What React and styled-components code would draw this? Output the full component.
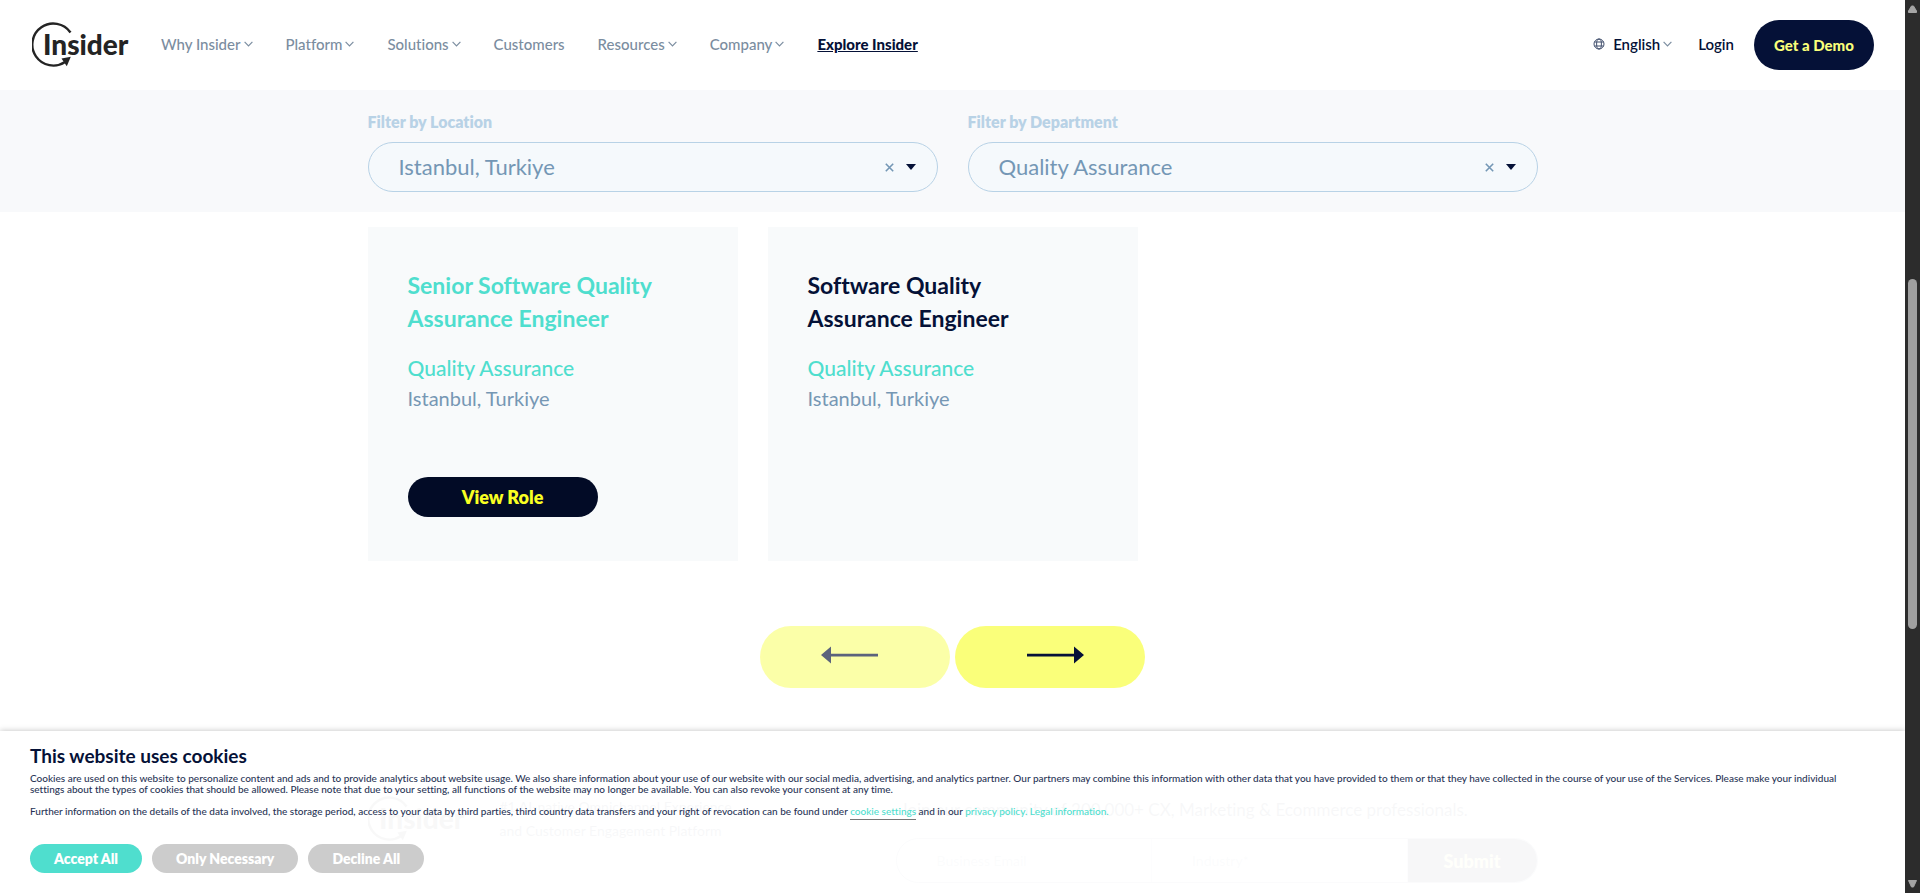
import React, { useState } from 'react';
import styled, { createGlobalStyle } from 'styled-components';

const navy = '#051137';
const teal = '#4fdece';
const yellow = '#faff7a';
const mist = '#f8fafb';
const slate = '#7497b5';

const GlobalStyle = createGlobalStyle`
  *, *::before, *::after { box-sizing: border-box; }
  body {
    margin: 0;
    overflow: hidden;
    background: #fff;
    color: ${navy};
    font-family: Lato, "Liberation Sans", sans-serif;
    font-variant-ligatures: none;
  }
  h2, h3, p { margin: 0; }
  a { color: inherit; text-decoration: none; }
  button, input, select { font-family: inherit; font-variant-ligatures: none; }
  button { border: 0; padding: 0; cursor: pointer; }
`;

const Shell = styled.div`
  display: flex;
  height: 100vh;
  overflow: hidden;
`;

const Page = styled.div`
  position: relative;
  flex: 1;
  min-width: 0;
  overflow: hidden;
`;

const Header = styled.header`
  display: flex;
  align-items: center;
  height: 90px;
  padding: 0 31px 0 32px;
`;

const HomeLink = styled.a`
  display: flex;
  margin-right: 31px;
`;

const Nav = styled.nav`
  display: flex;
  align-items: center;
  gap: 33px;
  margin-right: auto;
  padding-bottom: 2px;
`;

const NavItem = styled.a`
  display: flex;
  align-items: center;
  gap: 3px;
  color: ${(p) => (p.$strong ? navy : '#7b8da0')};
  font-size: 15px;
  font-weight: ${(p) => (p.$strong ? 900 : 500)};
  line-height: 20px;
  text-decoration: ${(p) => (p.$strong ? 'underline' : 'none')};
`;

const Account = styled.div`
  display: flex;
  align-items: center;
`;

const AccountLink = styled.a`
  display: flex;
  align-items: center;
  margin-right: ${(p) => p.$after}px;
  padding-bottom: 2px;
  font-size: 15px;
  font-weight: 600;
  line-height: 20px;
  svg:first-child { margin-right: 8px; }
  svg:last-child { margin-left: 3px; }
`;

const DemoButton = styled.button`
  width: 120px;
  height: 50px;
  border-radius: 25px;
  background: ${navy};
  color: ${yellow};
  font-size: 15px;
  font-weight: 900;
`;

const Filters = styled.form`
  padding: 22px 0 20px;
  background: #f8f9fb;
`;

const Container = styled.div`
  width: 100%;
  max-width: 1200px;
  margin: 0 auto;
  padding: 0 15px;
`;

const FilterRow = styled(Container)`
  display: grid;
  grid-template-columns: 1fr 1fr;
  gap: 30px;
`;

const FilterLabel = styled.label`
  display: block;
  margin-bottom: 10px;
  color: #b8d2e6;
  font-size: 16px;
  font-weight: 800;
  line-height: 20px;
`;

const SelectBox = styled.div`
  position: relative;
`;

const Select = styled.select`
  display: block;
  appearance: none;
  width: 100%;
  height: 50px;
  padding: 0 80px 2px 30px;
  border: 1px solid #b8d2e6;
  border-radius: 25px;
  outline: 0;
  background: #f5f9fc;
  color: ${slate};
  font-size: 22px;
`;

const SelectTools = styled.div`
  position: absolute;
  top: 0;
  right: 22px;
  display: flex;
  align-items: center;
  gap: 12px;
  height: 50px;
  pointer-events: none;
`;

const ClearButton = styled.button`
  display: flex;
  background: none;
  pointer-events: auto;
`;

const Cards = styled(Container)`
  display: grid;
  grid-template-columns: repeat(3, 1fr);
  gap: 30px;
  padding-top: 15px;
`;

const Card = styled.article`
  min-height: 334px;
  padding: 42px 40px 44px;
  background: ${mist};
`;

const CardTitle = styled.h3`
  max-width: 260px;
  margin-bottom: 17px;
  color: ${(p) => (p.$active ? teal : navy)};
  font-size: 23px;
  font-weight: 700;
  line-height: 33px;
`;

const Department = styled.p`
  color: ${teal};
  font-size: 21px;
  font-weight: 500;
  line-height: 31px;
`;

const Place = styled.p`
  color: #7697b4;
  font-size: 20px;
  line-height: 31px;
`;

const RoleLink = styled.a`
  display: flex;
  align-items: center;
  justify-content: center;
  width: 190px;
  height: 40px;
  margin-top: 63px;
  padding-bottom: 1px;
  border-radius: 20px;
  background: #020b26;
  color: #f9ff22;
  font-size: 18px;
  font-weight: 800;
`;

const Pager = styled.div`
  display: flex;
  justify-content: center;
  gap: 5px;
  padding: 65px 0;
`;

const PagerButton = styled.button`
  display: flex;
  align-items: center;
  justify-content: center;
  width: 190px;
  height: 62px;
  padding: 0 0 4px;
  border-radius: 31px;
  background: ${yellow};
  opacity: ${(p) => (p.disabled ? 0.65 : 1)};
`;

const Footer = styled.footer`
  padding: 42px 0 60px;
  background: #eceff2;
`;

const FooterRow = styled(Container)`
  display: flex;
  justify-content: space-between;
`;

const Brand = styled.div`
  display: flex;
  gap: 34px;
`;

const Tagline = styled.p`
  font-size: 14px;
  line-height: 24px;
`;

const Signup = styled.form`
  width: 642px;
`;

const SignupText = styled.p`
  padding: 4px 5px 17px;
  font-size: 17px;
  line-height: 22px;
`;

const SignupBar = styled.div`
  display: flex;
  height: 45px;
  overflow: hidden;
  border: 1px solid #7f8ca0;
  border-radius: 23px;
  background: #fff;
`;

const SignupInput = styled.input`
  flex: 1;
  min-width: 0;
  padding: 0 40px;
  border: 0;
  border-right: 1px solid #b5bfcc;
  background: none;
  font-size: 14px;
  &::placeholder { color: #8090a4; opacity: 1; }
`;

const SubmitButton = styled.button`
  width: 129px;
  background: ${navy};
  color: ${yellow};
  font-size: 18px;
  font-weight: 900;
`;

const CookieBar = styled.section`
  position: absolute;
  right: 0;
  bottom: 0;
  left: 0;
  padding: 15px 45px 20px 30px;
  background: rgba(255, 255, 255, 0.97);
  box-shadow: 0 0 6px rgba(0, 0, 0, 0.25);
`;

const CookieTitle = styled.h2`
  margin-bottom: 7px;
  font-size: 19px;
  font-weight: 700;
  line-height: 20px;
`;

const CookieText = styled.p`
  margin-bottom: 11px;
  color: #2a3556;
  font-size: 10px;
  font-weight: 500;
  line-height: 11px;
`;

const CookieLink = styled.a`
  padding-bottom: ${(p) => (p.$underlined ? 2 : 0)}px;
  border-bottom: ${(p) => (p.$underlined ? '1px solid #777' : '0')};
  color: ${teal};
`;

const CookieActions = styled.div`
  display: flex;
  gap: 10px;
  padding-top: 16px;
`;

const CookieButton = styled.button`
  height: 29px;
  padding: 0 24px;
  border-radius: 15px;
  background: ${(p) => (p.$primary ? teal : '#ccc')};
  color: #fff;
  font-size: 14px;
  font-weight: 800;
`;

const ScrollTrack = styled.div`
  display: flex;
  flex-direction: column;
  align-items: center;
  width: 15px;
  padding: 5px 0;
  background: #2c2c2c;
`;

const ScrollSpace = styled.div`
  flex: ${(p) => p.$share} 1 0;
`;

const ScrollThumb = styled.div`
  flex: 350 1 0;
  width: 9px;
  border-radius: 5px;
  background: #9f9f9f;
`;

const Logo = () => (
  <svg width="98" height="48" viewBox="0 0 98 48" role="img" aria-label="Insider">
    <path d="M38.5 11.5A21 21 0 1 0 33 41" fill="none" stroke="#242424" strokeWidth="2.4" />
    <path d="M29.5 37.5L38.8 35.8L34.8 45.2Z" fill="#242424" />
    <text x="11" y="34" fill="#242424" fontFamily="Lato, sans-serif" fontSize="28" fontWeight="900">Insider</text>
  </svg>
);

const Chevron = () => (
  <svg width="9" height="6" viewBox="0 0 9 6" fill="none" stroke="#7b8da0" strokeWidth="1.2" aria-hidden="true">
    <path d="M0.6 0.9L4.5 4.8L8.4 0.9" />
  </svg>
);

const Globe = () => (
  <svg width="12" height="12" viewBox="0 0 12 12" fill="none" stroke="#42506e" strokeWidth="1" aria-hidden="true">
    <circle cx="6" cy="6" r="5" />
    <ellipse cx="6" cy="6" rx="2.4" ry="5" />
    <path d="M1.5 4H10.5M1.5 8H10.5" />
  </svg>
);

const Cross = () => (
  <svg width="9" height="9" viewBox="0 0 9 9" stroke={slate} strokeWidth="1.6" aria-hidden="true">
    <path d="M0.8 0.8L8.2 8.2M8.2 0.8L0.8 8.2" />
  </svg>
);

const Caret = () => (
  <svg width="10" height="6" viewBox="0 0 10 6" fill={navy} aria-hidden="true">
    <path d="M0 0H10L5 6Z" />
  </svg>
);

const ArrowLeft = () => (
  <svg width="103" height="18" viewBox="0 0 103 18" fill={navy} aria-hidden="true">
    <path d="M17 9L27 0.5V7.7H74V10.5H27V17.5Z" />
  </svg>
);

const ArrowRight = () => (
  <svg width="103" height="18" viewBox="0 0 103 18" fill={navy} aria-hidden="true">
    <path d="M85 9L75 0.5V7.7H28V10.5H75V17.5Z" />
  </svg>
);

const ScrollArrow = ({ down }) => (
  <svg width="9" height="8" viewBox="0 0 9 8" fill="#a5a5a5" stroke="#a5a5a5" strokeWidth="1" strokeLinejoin="round" aria-hidden="true">
    <path d={down ? 'M0.5 0.5H8.5L5.5 7H3.5Z' : 'M0.5 7.5H8.5V6L5.5 1H3.5L0.5 6Z'} />
  </svg>
);

const navItems = [
  { label: 'Why Insider', menu: true },
  { label: 'Platform', menu: true },
  { label: 'Solutions', menu: true },
  { label: 'Customers' },
  { label: 'Resources', menu: true },
  { label: 'Company', menu: true },
  { label: 'Explore Insider', strong: true },
];

const jobs = [
  { title: 'Senior Software Quality Assurance Engineer', active: true },
  { title: 'Software Quality Assurance Engineer' },
];

function Filter({ id, label, option }) {
  const [value, setValue] = useState(option);
  return (
    <div>
      <FilterLabel htmlFor={id}>{label}</FilterLabel>
      <SelectBox>
        <Select id={id} value={value} onChange={(e) => setValue(e.target.value)}>
          <option value="">All</option>
          <option value={option}>{option}</option>
        </Select>
        <SelectTools>
          <ClearButton type="button" aria-label={`Clear ${label}`} onClick={() => setValue('')}>
            <Cross />
          </ClearButton>
          <Caret />
        </SelectTools>
      </SelectBox>
    </div>
  );
}

export default function App() {
  const [cookiesOpen, setCookiesOpen] = useState(true);
  const closeCookies = () => setCookiesOpen(false);

  return (
    <>
      <GlobalStyle />
      <Shell>
        <Page>
          <Header>
            <HomeLink href="#"><Logo /></HomeLink>
            <Nav>
              {navItems.map((item) => (
                <NavItem key={item.label} href="#" $strong={item.strong}>
                  {item.label}
                  {item.menu && <Chevron />}
                </NavItem>
              ))}
            </Nav>
            <Account>
              <AccountLink href="#" $after={26}><Globe />English<Chevron /></AccountLink>
              <AccountLink href="#" $after={20}>Login</AccountLink>
              <DemoButton type="button">Get a Demo</DemoButton>
            </Account>
          </Header>

          <Filters>
            <FilterRow>
              <Filter id="location" label="Filter by Location" option="Istanbul, Turkiye" />
              <Filter id="department" label="Filter by Department" option="Quality Assurance" />
            </FilterRow>
          </Filters>

          <main>
            <Cards>
              {jobs.map((job) => (
                <Card key={job.title}>
                  <CardTitle $active={job.active}>{job.title}</CardTitle>
                  <Department>Quality Assurance</Department>
                  <Place>Istanbul, Turkiye</Place>
                  {job.active && <RoleLink href="#">View Role</RoleLink>}
                </Card>
              ))}
            </Cards>
            <Pager>
              <PagerButton type="button" aria-label="Previous" disabled><ArrowLeft /></PagerButton>
              <PagerButton type="button" aria-label="Next"><ArrowRight /></PagerButton>
            </Pager>
          </main>

          <Footer>
            <FooterRow>
              <Brand>
                <Logo />
                <Tagline>#1 AI-native Omnichannel Experience<br />and Customer Engagement Platform</Tagline>
              </Brand>
              <Signup>
                <SignupText>Join our community of 200,000+ CX, Marketing &amp; Ecommerce professionals.</SignupText>
                <SignupBar>
                  <SignupInput type="email" placeholder="Business Email" aria-label="Business Email" />
                  <SignupInput type="text" placeholder="Industry*" aria-label="Industry" />
                  <SubmitButton type="button">Submit</SubmitButton>
                </SignupBar>
              </Signup>
            </FooterRow>
          </Footer>

          {cookiesOpen && (
            <CookieBar>
              <CookieTitle>This website uses cookies</CookieTitle>
              <CookieText>
                Cookies are used on this website to personalize content and ads and to provide analytics about website usage. We also share information about your use of our website with our social media, advertising, and analytics partner. Our partners may combine this information with other data that you have provided to them or that they have collected in the course of your use of the Services. Please make your individual settings about the types of cookies that should be allowed. Please note that due to your setting, all functions of the website may no longer be available. You can also revoke your consent at any time.
              </CookieText>
              <CookieText>
                Further information on the details of the data involved, the storage period, access to your data by third parties, third country data transfers and your right of revocation can be found under{' '}
                <CookieLink href="#" $underlined>cookie settings</CookieLink> and in our{' '}
                <CookieLink href="#">privacy policy.</CookieLink> <CookieLink href="#">Legal information.</CookieLink>
              </CookieText>
              <CookieActions>
                <CookieButton type="button" $primary onClick={closeCookies}>Accept All</CookieButton>
                <CookieButton type="button" onClick={closeCookies}>Only Necessary</CookieButton>
                <CookieButton type="button" onClick={closeCookies}>Decline All</CookieButton>
              </CookieActions>
            </CookieBar>
          )}
        </Page>

        <ScrollTrack aria-hidden="true">
          <ScrollArrow />
          <ScrollSpace $share={266} />
          <ScrollThumb />
          <ScrollSpace $share={251} />
          <ScrollArrow down />
        </ScrollTrack>
      </Shell>
    </>
  );
}
